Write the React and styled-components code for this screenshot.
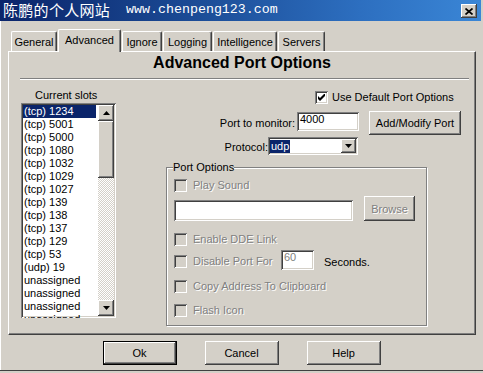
import React from 'react';
import styled, { createGlobalStyle, css } from 'styled-components';

const Global = createGlobalStyle`
  html, body { margin: 0; padding: 0; background: #d4d0c8; }
  body { font-family: "Liberation Sans", Arial, sans-serif; font-size: 11px; color: #000; }
  * { box-sizing: border-box; }
`;

const raised = css`
  background: #d4d0c8;
  box-shadow: inset -1px -1px 0 #404040, inset 1px 1px 0 #fff, inset -2px -2px 0 #808080;
`;
const sunken = css`
  box-shadow: inset 1px 1px 0 #808080, inset -1px -1px 0 #fff, inset 2px 2px 0 #404040, inset -2px -2px 0 #d4d0c8;
`;
const disabledText = css`
  color: #808080;
  text-shadow: 1px 1px 0 #fff;
`;

const Window = styled.div`
  width: 483px;
  height: 373px;
  display: flex;
  flex-direction: column;
  background: #d4d0c8;
  box-shadow: inset 0 -2px 0 #d4d0c8, inset 0 -3px 0 #404040, inset 1px 0 0 #fff;
`;

const TitleBar = styled.div`
  height: 21px;
  margin-right: 2px;
  display: flex;
  align-items: flex-start;
  padding-left: 3px;
  color: #fff;
  background: linear-gradient(to right, #0a246a 0%, #1b4b95 40%, #2d6fc0 75%, #3a86d6 100%);
`;

const TitleCn = styled.span`
  font-family: "Noto Sans CJK SC", "Noto Sans", sans-serif;
  font-size: 15px;
  line-height: 19px;
  letter-spacing: 0.3px;
`;

const TitleUrl = styled.span`
  font-family: "Liberation Mono", monospace;
  font-size: 13.3px;
  line-height: 19px;
  margin-left: 16px;
`;

const CloseBtn = styled.div`
  ${raised};
  width: 16px;
  height: 14px;
  margin: 4px 4px 0 auto;
  display: flex;
  align-items: center;
  justify-content: center;
`;

const TabStrip = styled.div`
  display: flex;
  align-items: flex-end;
  height: 22px;
  margin: 8px 0 0 11px;
  position: relative;
  z-index: 1;
`;

const Tab = styled.div`
  width: ${p => p.$w}px;
  height: ${p => (p.$active ? 23 : 20)}px;
  margin-left: ${p => p.$ml}px;
  margin-bottom: ${p => (p.$active ? -1 : 0)}px;
  padding-bottom: ${p => (p.$active ? 2 : 0)}px;
  display: flex;
  align-items: center;
  justify-content: center;
  background: #d4d0c8;
  border-top: 1px solid #fff;
  border-left: 1px solid #fff;
  border-right: 1px solid #404040;
  border-radius: 2px 2px 0 0;
  box-shadow: inset -1px 0 0 #808080;
  white-space: nowrap;
`;

const Panel = styled.div`
  margin-left: 8px;
  width: 468px;
  height: 284px;
  border-top: 1px solid #fff;
  border-left: 1px solid #fff;
  border-right: 1px solid #404040;
  border-bottom: 1px solid #404040;
  box-shadow: inset -1px -1px 0 #808080;
  display: flex;
  flex-direction: column;
`;

const Heading = styled.div`
  margin-top: 2px;
  font-size: 16px;
  font-weight: bold;
  line-height: 18px;
  text-align: center;
`;

const Divider = styled.div`
  margin: 6px 6px 0 11px;
  height: 2px;
  border-top: 1px solid #808080;
  border-bottom: 1px solid #fff;
`;

const Content = styled.div`
  display: flex;
  padding-left: 12px;
`;

const LeftCol = styled.div`
  width: 96px;
  display: flex;
  flex-direction: column;
`;

const SlotsLabel = styled.div`
  margin-top: 9px;
  line-height: 13px;
  padding-left: 14px;
`;

const ListBox = styled.div`
  ${sunken};
  margin-top: 1px;
  width: 95px;
  height: 215px;
  background: #fff;
  padding: 2px;
  display: flex;
  overflow: hidden;
`;

const Items = styled.div`
  flex: 1;
  display: flex;
  flex-direction: column;
`;

const Item = styled.div`
  height: 13px;
  line-height: 13px;
  padding-left: 1px;
  width: 73px;
  flex-shrink: 0;
  white-space: nowrap;
  background: ${p => (p.$sel ? '#0a246a' : 'transparent')};
  color: ${p => (p.$sel ? '#fff' : '#000')};
`;

const ScrollBar = styled.div`
  width: 16px;
  display: flex;
  flex-direction: column;
`;

const ScrollBtn = styled.div`
  ${raised};
  height: 16px;
  flex-shrink: 0;
  display: flex;
  align-items: center;
  justify-content: center;
`;

const Thumb = styled.div`
  ${raised};
  height: 57px;
  flex-shrink: 0;
`;

const Track = styled.div`
  flex: 1;
  background: repeating-conic-gradient(#d4d0c8 0 25%, #fff 0 50%) 0 0 / 2px 2px;
`;

const RightCol = styled.div`
  margin-left: 49px;
  width: 304px;
  display: flex;
  flex-direction: column;
`;

const CheckRow = styled.div`
  display: flex;
  align-items: center;
  gap: ${p => p.$gap || 6}px;
  margin-top: ${p => p.$mt || 0}px;
  margin-left: ${p => p.$ml || 0}px;
  height: 13px;
  line-height: 13px;
  white-space: nowrap;
  ${p => p.$disabled && disabledText};
`;

const Box = styled.div`
  ${sunken};
  width: 13px;
  height: 13px;
  flex-shrink: 0;
  margin-top: ${p => p.$mt || 0}px;
  background: ${p => (p.$disabled ? '#d4d0c8' : '#fff')};
  display: flex;
  align-items: center;
  justify-content: center;
  text-shadow: none;
`;

const FormRow = styled.div`
  display: flex;
  align-items: flex-start;
  margin-top: ${p => p.$mt}px;
`;

const FieldLabel = styled.div`
  width: ${p => p.$w}px;
  margin-top: ${p => p.$mt}px;
  padding-right: ${p => p.$pr || 0}px;
  text-align: right;
  line-height: 13px;
  white-space: nowrap;
`;

const TextBox = styled.div`
  ${sunken};
  width: ${p => p.$w}px;
  height: ${p => p.$h}px;
  margin-top: ${p => p.$mt || 0}px;
  margin-left: ${p => p.$ml || 0}px;
  background: #fff;
  padding: 1px 3px 0;
  line-height: 13px;
  color: ${p => (p.$disabled ? '#808080' : '#000')};
`;

const Button = styled.button`
  ${raised};
  font: inherit;
  color: #000;
  border: none;
  padding: 0;
  width: ${p => p.$w}px;
  height: ${p => p.$h}px;
  margin-left: ${p => p.$ml || 0}px;
  display: flex;
  align-items: center;
  justify-content: center;
  white-space: nowrap;
  ${p => p.$disabled && disabledText};
  ${p => p.$default && css`
    border: 1px solid #000;
  `};
`;

const Combo = styled.div`
  ${sunken};
  width: 90px;
  height: 18px;
  background: #fff;
  padding: 2px;
  display: flex;
  align-items: center;
`;

const ComboSel = styled.span`
  background: #0a246a;
  color: #fff;
  line-height: 13px;
  padding: 0 1px;
`;

const ComboBtn = styled.div`
  ${raised};
  width: 15px;
  height: 14px;
  margin-left: auto;
  display: flex;
  align-items: center;
  justify-content: center;
`;

const Group = styled.fieldset`
  margin: 6px 0 0 0;
  width: 261px;
  min-width: 0;
  padding: 0 0 8px 7px;
  border: 1px solid #808080;
  box-shadow: inset 1px 1px 0 #fff, 1px 1px 0 #fff;
`;

const Legend = styled.legend`
  padding: 0;
  margin-left: -1px;
  line-height: 12px;
  background: #d4d0c8;
`;

const FileRow = styled.div`
  display: flex;
  align-items: flex-end;
  margin-top: 4px;
`;

const PlainText = styled.span`
  display: inline-block;
  width: ${p => (p.$w ? `${p.$w}px` : 'auto')};
  margin-left: ${p => p.$ml || 0}px;
  margin-top: ${p => p.$mt || 0}px;
  line-height: 13px;
  white-space: nowrap;
  ${p => p.$disabled && disabledText};
`;

const ButtonRow = styled.div`
  display: flex;
  justify-content: center;
  gap: 28px;
  margin-top: 6px;
`;

const Up = () => (
  <svg width="7" height="4" viewBox="0 0 7 4"><path d="M3.5 0 L7 4 L0 4 Z" fill="#000" /></svg>
);
const Down = () => (
  <svg width="7" height="4" viewBox="0 0 7 4"><path d="M0 0 L7 0 L3.5 4 Z" fill="#000" /></svg>
);
const Check = () => (
  <svg width="7" height="7" viewBox="0 0 7 7">
    <path d="M0 2 L0 5 L2 7 L7 2 L7 -1 L2 4 Z" fill="#000" />
  </svg>
);

const slots = [
  '(tcp) 1234', '(tcp) 5001', '(tcp) 5000', '(tcp) 1080', '(tcp) 1032', '(tcp) 1029',
  '(tcp) 1027', '(tcp) 139', '(tcp) 138', '(tcp) 137', '(tcp) 129', '(tcp) 53',
  '(udp) 19', 'unassigned', 'unassigned', 'unassigned', 'unassigned',
];

const tabs = [
  { label: 'General', w: 46, ml: 0 },
  { label: 'Advanced', w: 63, ml: 1, active: true },
  { label: 'Ignore', w: 40, ml: 1 },
  { label: 'Logging', w: 49, ml: 1 },
  { label: 'Intelligence', w: 64, ml: 1 },
  { label: 'Servers', w: 47, ml: 1 },
];

export default function App() {
  return (
    <>
      <Global />
      <Window>
        <TitleBar>
          <TitleCn>陈鹏的个人网站</TitleCn>
          <TitleUrl>www.chenpeng123.com</TitleUrl>
          <CloseBtn>
            <svg width="8" height="7" viewBox="0 0 8 7">
              <path d="M0.5 0.5 L7.5 6.5 M7.5 0.5 L0.5 6.5" stroke="#000" strokeWidth="1.7" />
            </svg>
          </CloseBtn>
        </TitleBar>

        <TabStrip>
          {tabs.map(t => (
            <Tab key={t.label} $w={t.w} $ml={t.ml} $active={t.active}>{t.label}</Tab>
          ))}
        </TabStrip>

        <Panel>
          <Heading>Advanced Port Options</Heading>
          <Divider />
          <Content>
            <LeftCol>
              <SlotsLabel>Current slots</SlotsLabel>
              <ListBox>
                <Items>
                  {slots.map((s, i) => (
                    <Item key={i} $sel={i === 0}>{s}</Item>
                  ))}
                </Items>
                <ScrollBar>
                  <ScrollBtn><Up /></ScrollBtn>
                  <Thumb />
                  <Track />
                  <ScrollBtn><Down /></ScrollBtn>
                </ScrollBar>
              </ListBox>
            </LeftCol>

            <RightCol>
              <CheckRow $mt={11} $ml={149} $gap={4}>
                <Box><Check /></Box>
                <span>Use Default Port Options</span>
              </CheckRow>

              <FormRow $mt={7}>
                <FieldLabel $w={131} $mt={6} $pr={2}>Port to monitor:</FieldLabel>
                <TextBox $w={62} $h={19} $mt={1}>4000</TextBox>
                <Button $w={92} $h={24} $ml={10}>Add/Modify Port</Button>
              </FormRow>

              <FormRow $mt={2}>
                <FieldLabel $w={102} $mt={4}>Protocol:</FieldLabel>
                <Combo>
                  <ComboSel>udp</ComboSel>
                  <ComboBtn><Down /></ComboBtn>
                </Combo>
              </FormRow>

              <Group>
                <Legend>Port Options</Legend>
                <CheckRow $mt={6} $disabled>
                  <Box $disabled />
                  <span>Play Sound</span>
                </CheckRow>
                <FileRow>
                  <TextBox $w={179} $h={21} />
                  <Button $w={51} $h={25} $ml={11} $disabled>Browse</Button>
                </FileRow>
                <CheckRow $mt={12} $disabled>
                  <Box $disabled />
                  <span>Enable DDE Link</span>
                </CheckRow>
                <FormRow $mt={4}>
                  <Box $disabled $mt={5} />
                  <PlainText $w={88} $ml={6} $mt={5} $disabled>Disable Port For</PlainText>
                  <TextBox $w={33} $h={20} $disabled>60</TextBox>
                  <PlainText $ml={10} $mt={6}>Seconds.</PlainText>
                </FormRow>
                <CheckRow $mt={10} $disabled>
                  <Box $disabled />
                  <span>Copy Address To Clipboard</span>
                </CheckRow>
                <CheckRow $mt={11} $disabled>
                  <Box $disabled />
                  <span>Flash Icon</span>
                </CheckRow>
              </Group>
            </RightCol>
          </Content>
        </Panel>

        <ButtonRow>
          <Button $w={74} $h={24} $default>Ok</Button>
          <Button $w={74} $h={24}>Cancel</Button>
          <Button $w={74} $h={24}>Help</Button>
        </ButtonRow>
      </Window>
    </>
  );
}
